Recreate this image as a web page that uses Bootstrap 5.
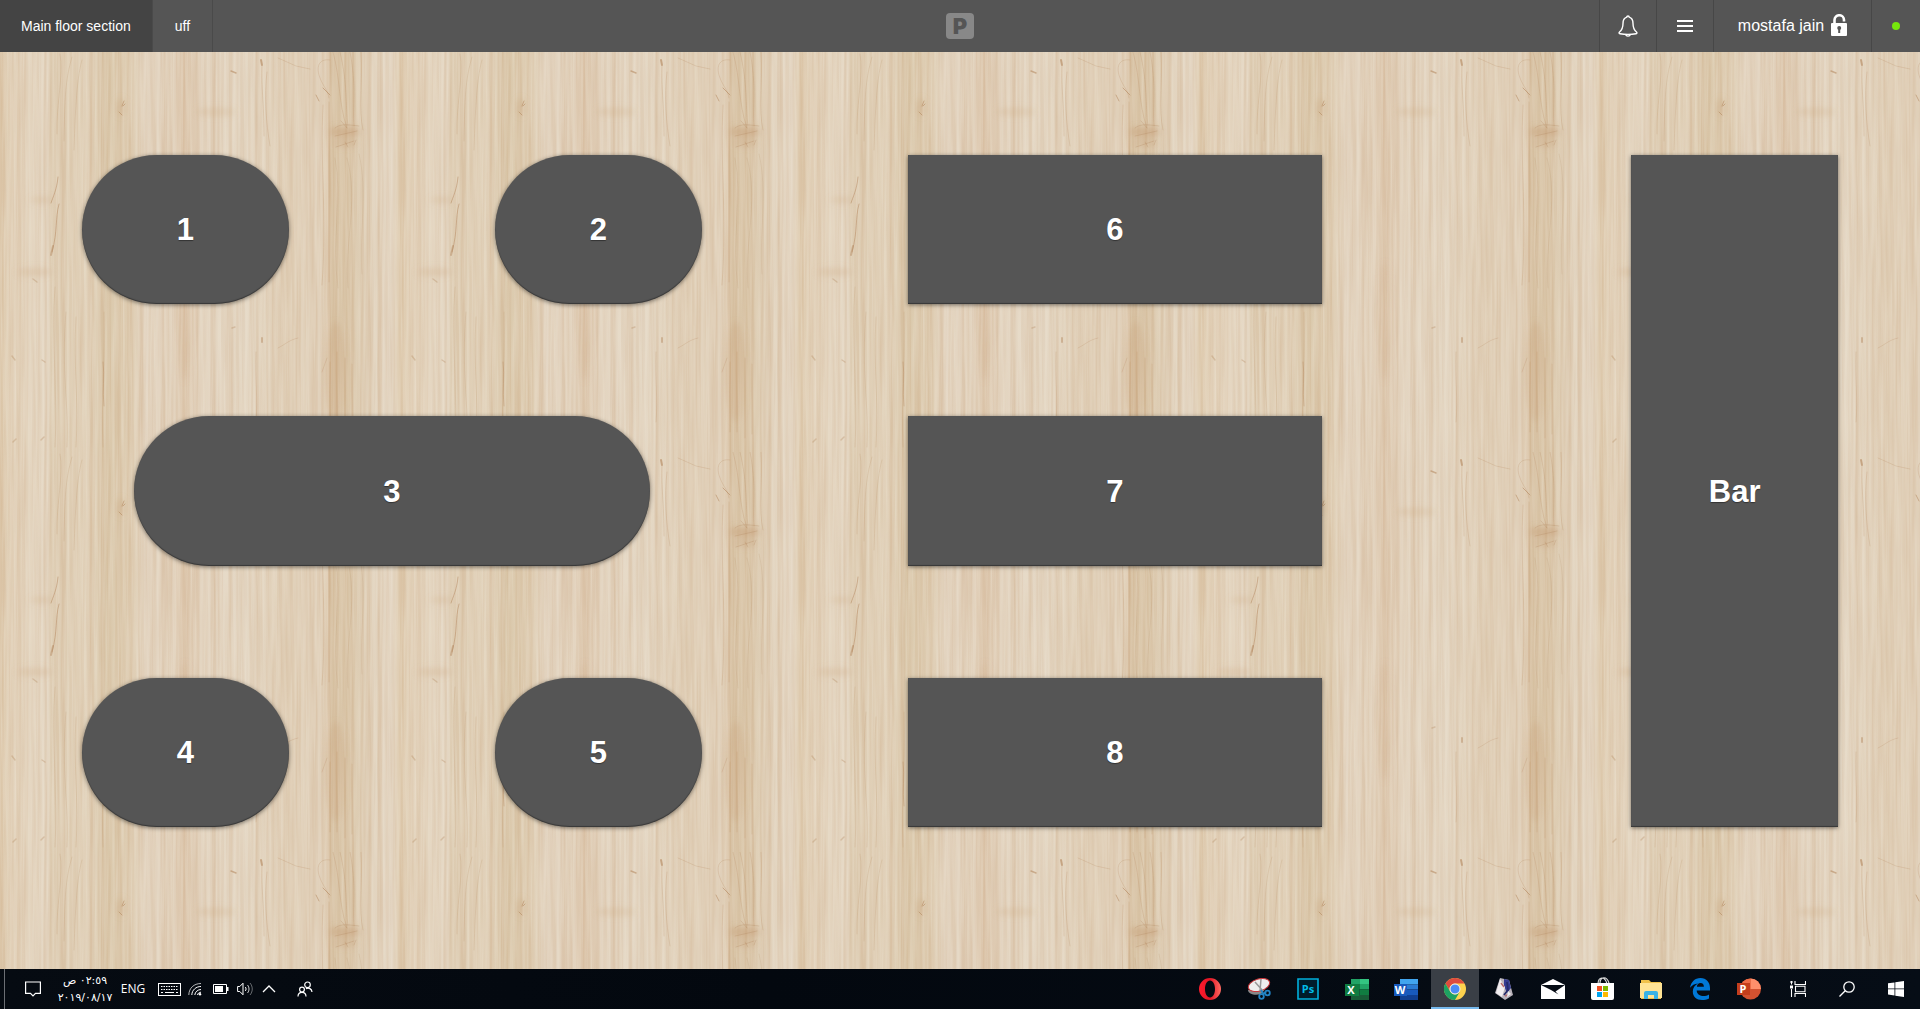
<!DOCTYPE html>
<html lang="en">
<head>
<meta charset="utf-8">
<meta name="viewport" content="width=device-width, initial-scale=1">
<title>Main floor section</title>
<link href="https://cdn.jsdelivr.net/npm/bootstrap@5.3.0/dist/css/bootstrap.min.css" rel="stylesheet">
<style>
  body { font-family: "Liberation Sans", Arial, sans-serif; background: #e1d3be; }
  svg { display: block; }

  /* top bar */
  .topbar { height: 52px; background: #555; color: #fff; display: grid; grid-template-columns: 1fr auto 1fr; }
  .topbar .cell { height: 52px; border: 0; background: none; color: #fff; text-decoration: none; font-size: 14px; padding: 0 20px; display: flex; align-items: center; justify-content: center; }
  .tabs .cell { border-right: 1px solid #4a4a4a; padding: 0 22px; }
  .tabs .cell.current { background: #444; padding: 0 21px; }
  .tools .cell { border-left: 1px solid #474747; width: 57px; padding: 0; }
  .tools .user { width: 158px; font-size: 16px; gap: 7px; }
  .tools .status { width: 49px; }
  .dot { width: 8px; height: 8px; border-radius: 50%; background: #76e80d; }
  .brand { width: 28px; height: 26px; border-radius: 4px; background: #888; }

  /* floor */
  .wood { z-index: 0; }
  .plan { z-index: 1; display: grid; grid-template-columns: repeat(34, 1fr); grid-template-rows: repeat(18, 1fr); padding: 103px 82px 142px; }
  .seat { background: #555; color: #fff; border: 0; font-size: 31px; font-weight: 700; padding: 2px 0 0; text-shadow: 0 1px 1px rgba(0,0,0,.4); box-shadow: 0 1px 4px rgba(0,0,0,.5), inset 0 -1px 1px rgba(0,0,0,.35); border-radius: 0; }
  .seat:hover { background: #555; color: #fff; }
  .r1 { grid-row: 1 / span 4; } .r2 { grid-row: 8 / span 4; } .r3 { grid-row: 15 / span 4; }
  .c1 { grid-column: 1 / span 4; } .c2 { grid-column: 9 / span 4; } .c3 { grid-column: 17 / span 8; }
  .wide { grid-column: 2 / span 10; }
  .counter { grid-column: 31 / span 4; grid-row: 1 / span 18; }

  /* task bar */
  .taskbar { height: 40px; background: linear-gradient(90deg, #060b12, #03080f 40%, #060d16); color: #fff; }
  .taskbar button { border: 0; background: none; color: #fff; padding: 0; height: 40px; display: flex; align-items: center; justify-content: center; }
  .peek { width: 5px; border-right: 1px solid #6c6f74; }
  .w24 { width: 24px; } .w28 { width: 28px; } .w48 { width: 48px; } .w56 { width: 56px; }
  .clock { flex-direction: column; font-family: "DejaVu Sans", sans-serif; font-size: 11px; line-height: 17px; white-space: nowrap; }
  .lang { font-family: "Open Sans", "Noto Sans", sans-serif; font-size: 12px; }
  .apps { gap: 1px; }
  .apps button { width: 48px; }
  .apps .running { background: #3a3f46; border-bottom: 2px solid #76b9ed; padding-top: 2px; }
</style>
<script src="https://cdn.jsdelivr.net/npm/bootstrap@5.3.0/dist/js/bootstrap.bundle.min.js"></script>
</head>
<body class="d-flex flex-column vh-100 overflow-hidden">

<header class="topbar flex-shrink-0">
  <nav class="tabs d-flex" aria-label="Sections">
    <a class="cell current" href="#" aria-current="page">Main floor section</a>
    <a class="cell" href="#">uff</a>
  </nav>
  <div class="d-flex align-items-center">
    <svg class="brand" viewBox="0 0 28 26" role="img" aria-label="P">
      <text x="14" y="21" text-anchor="middle" font-family="Inter, sans-serif" font-weight="900" font-size="22" fill="#555">P</text>
    </svg>
  </div>
  <div class="tools d-flex justify-content-end">
    <button class="cell" aria-label="Notifications">
      <svg width="20" height="22" viewBox="0 0 20 22" fill="none" stroke="#fff" stroke-width="1.4" stroke-linecap="round" stroke-linejoin="round"><path d="M8.8 2.2a1.2 1.2 0 0 1 2.4 0C14 3 15 5.500 15 8.500c0 4.500 1 6.500 3.500 8.500.9.8.5 1.500-.5 1.700-5 .9-11 .9-16 0-1-.2-1.400-.9-.5-1.700C4 15 5 13 5 8.500 5 5.500 6 3 8.800 2.200z"/><path d="M8 20.200c1 1 3 1 4 0"/></svg>
    </button>
    <button class="cell" aria-label="Menu">
      <svg width="16" height="12" viewBox="0 0 16 12" fill="#fff"><path d="M0 0h16v2H0zM0 5h16v2H0zM0 10h16v2H0z"/></svg>
    </button>
    <button class="cell user"><span>mostafa jain</span>
      <svg width="16" height="25" viewBox="0 0 16 25"><path d="M3.500 10V6a4.700 4.700 0 0 1 9.500 0v1.500" fill="none" stroke="#fff" stroke-width="2.600"/><rect y="9" width="16" height="13" rx="1" fill="#fff"/><circle cx="8.200" cy="14" r="2" fill="#555"/><path d="M7.200 14h2v5h-2z" fill="#555"/></svg>
    </button>
    <div class="cell status"><span class="dot"></span></div>
  </div>
</header>

<main class="position-relative flex-grow-1 d-flex">
  <svg class="wood position-absolute top-0 start-0 w-100 h-100" aria-hidden="true">
    <defs>
      <linearGradient id="planks">
        <stop offset="0" stop-color="#dfccb0"/><stop offset=".03" stop-color="#e3d3bc"/><stop offset=".12" stop-color="#e5d8c5"/>
        <stop offset=".127" stop-color="#dfcfb6"/><stop offset=".22" stop-color="#e2d3bc"/><stop offset=".27" stop-color="#dac8ab"/>
        <stop offset=".33" stop-color="#dfceb4"/><stop offset=".36" stop-color="#e4d6c3"/><stop offset=".43" stop-color="#e2d2bd"/>
        <stop offset=".46" stop-color="#dec9b0"/><stop offset=".5" stop-color="#e3d4c0"/><stop offset=".6" stop-color="#e4d7c4"/>
        <stop offset=".72" stop-color="#e1d1ba"/><stop offset=".8" stop-color="#e1d1bb"/><stop offset=".822" stop-color="#e0ceb5"/>
        <stop offset=".826" stop-color="#d8c3a5"/><stop offset=".87" stop-color="#dac7aa"/><stop offset=".92" stop-color="#e1d2bc"/>
        <stop offset=".98" stop-color="#e5d8c6"/><stop offset="1" stop-color="#dfccb0"/>
      </linearGradient>
      <filter id="grain" x="0" y="0" width="1" height="1" color-interpolation-filters="sRGB">
        <feTurbulence type="fractalNoise" baseFrequency=".18 .003" numOctaves="3" seed="7" stitchTiles="stitch"/>
        <feColorMatrix values="0 0 0 0 .74  0 0 0 0 .56  0 0 0 0 .38  .6 0 0 0 -.21"/>
      </filter>
      <filter id="fibre" x="0" y="0" width="1" height="1" color-interpolation-filters="sRGB">
        <feTurbulence type="fractalNoise" baseFrequency=".4 .012" numOctaves="2" seed="21" stitchTiles="stitch"/>
        <feColorMatrix values="0 0 0 0 .94  0 0 0 0 .91  0 0 0 0 .85  0 .7 0 0 -.25"/>
      </filter>
      <filter id="soft" x="-1" y="-1" width="3" height="3"><feGaussianBlur stdDeviation="3"/></filter>
      <pattern id="timber" width="400" height="400" patternUnits="userSpaceOnUse">
        <rect width="400" height="400" fill="url(#planks)"/>
        <rect width="400" height="400" filter="url(#grain)"/>
        <rect width="400" height="400" filter="url(#fibre)"/>
        <g fill="#c49a70" filter="url(#soft)">
          <ellipse cx="345" cy="80" rx="15" ry="5" opacity=".5"/>
          <ellipse cx="345" cy="91" rx="12" ry="4" opacity=".3"/>
          <ellipse cx="336" cy="320" rx="10" ry="50" opacity=".22"/>
          <ellipse cx="216" cy="60" rx="20" ry="4" opacity=".2"/>
          <ellipse cx="121" cy="55" rx="5" ry="9" opacity=".2"/>
          <ellipse cx="185" cy="270" rx="6" ry="60" opacity=".15"/>
          <ellipse cx="35" cy="220" rx="18" ry="4" opacity=".22"/>
          <ellipse cx="42" cy="148" rx="12" ry="3" opacity=".22"/>
        </g>
        <g fill="none" stroke="#ad7d52" stroke-linecap="round">
          <path d="M58 125c-1 12-5 20-7 26M59 152c-4 15-1 26-7 48" stroke-width="1" opacity=".45"/>
          <path d="M53 194l-2 9" stroke-width="2" opacity=".4"/>
          <path d="M60 2c4 20-4 50-3 80M72 5c-7 24-7 40-8 84M82 8c-6 20-7 62-8 90M55 235c-4 50 3 110 0 160M66 260c-5 60 3 90 1 135M76 265c-3 50 3 80 0 130M104 260c1 50-3 90-1 135" stroke-width=".8" opacity=".22"/>
          <path d="M103 310c2 14-1 28 1 44" opacity=".35"/>
          <path d="M119 60l3 3M124 49l-2 5M123 54l2-2" opacity=".5"/>
          <path d="M231 19l5 2" stroke-width="1.500" opacity=".5"/><path d="M261 8l1 5" stroke-width="2" opacity=".55"/>
          <path d="M262 14c-1 22 2 34 2 70M267 20c-3 24-1 50 3 74M256 300c-1 28 2 46 0 70M278 6l18 8 14 3" opacity=".2"/>
          <path d="M262 286v4" stroke-width="2" opacity=".4"/><path d="M232 276l3-1" stroke-width="1.500" opacity=".3"/>
          <path d="M316 43l3 6M323 36l7 7" opacity=".5"/>
          <path d="M330 8c-12-2-14 8-10 18s8 12 9 20M333 0c8 30 5 50 14 76M340 0c8 34 5 50 8 74M350 0c7 36 2 54 4 74M361 0c2 32-3 56 2 78M323 53c-3 60 4 110-1 180M329 50v180" stroke-width=".8" opacity=".25"/>
          <path d="M335 76c6-5 14-3 24-2M335 84l22-5M341 69l6 7M336 95l18-6M345 90l3 5M356 88l-2 5" stroke-width=".8" opacity=".3"/>
          <path d="M335 106c8 40-4 80 3 130M347 106c12 44-3 84 1 130M359 102c9 38 0 80 3 120" stroke-width=".8" opacity=".18"/>
          <path d="M12 304l3 4M42 308l3 2M13 390l3-3M41 388l3-3M33 227l4 3" stroke-width="1.500" opacity=".3"/>
          <path d="M278 296c8-4 11-8 20-10M327 306l-5 14M330 310v70M337 300v80M345 306v80M352 312v70" stroke-width=".8" opacity=".25"/>
        </g>
      </pattern>
    </defs>
    <rect width="100%" height="100%" fill="url(#timber)"/>
  </svg>

  <div class="plan position-relative flex-grow-1">
    <button class="btn seat rounded-pill r1 c1">1</button>
    <button class="btn seat rounded-pill r1 c2">2</button>
    <button class="btn seat r1 c3">6</button>
    <button class="btn seat rounded-pill r2 wide">3</button>
    <button class="btn seat r2 c3">7</button>
    <button class="btn seat rounded-pill r3 c1">4</button>
    <button class="btn seat rounded-pill r3 c2">5</button>
    <button class="btn seat r3 c3">8</button>
    <button class="btn seat counter">Bar</button>
  </div>
</main>

<footer class="taskbar d-flex justify-content-between flex-shrink-0">
  <div class="d-flex">
    <div class="peek"></div>
    <button class="w56" aria-label="Action center"><svg width="16" height="16" viewBox="0 0 16 16" fill="none" stroke="#fff" stroke-width="1.200"><path d="M.6 1h14.800v11.400H10.500L8 15l-2.500-2.600H.6z"/></svg></button>
    <button class="w48 clock"><span dir="rtl">٠٢:٥٩ ص</span><span dir="ltr">٢٠١٩/٠٨/١٧</span></button>
    <button class="w48 lang">ENG</button>
    <button class="w24" aria-label="Keyboard"><svg width="23" height="13" viewBox="0 0 23 13" fill="none" stroke="#fff"><rect x=".5" y=".5" width="22" height="12"/><path d="M3 3.500h17M3 6.500h17" stroke-dasharray="1.500 1"/><path d="M3 9.500h2M7 9.500h9M18 9.500h2"/></svg></button>
    <button class="w28" aria-label="Network"><svg width="14" height="14" viewBox="0 0 14 14" fill="none" stroke="#fff"><path d="M.8 13C1 6 6 1.500 13 1.500" opacity=".7"/><path d="M3.800 13C4 8 8 4.500 13 4.500M6.800 13c.2-3 3-5.500 6.200-5.500M9.500 13c.2-1.500 1.700-2.800 3.500-2.800"/><circle cx="12" cy="12.200" r="1.200" fill="#fff" stroke="none"/></svg></button>
    <button class="w24" aria-label="Battery"><svg width="16" height="10" viewBox="0 0 16 10"><path d="M.5.5h13v9H.5z" fill="none" stroke="#fff"/><path d="M2 2h8v6H2zM14 3h1.500v4H14z" fill="#fff"/></svg></button>
    <button class="w24" aria-label="Volume"><svg width="17" height="14" viewBox="0 0 17 14" fill="none" stroke="#fff"><path d="M.6 4.500h2.200L6 1.200v11.600L2.800 9.500H.6zM8.300 5c1 1.200 1 2.800 0 4"/><path d="M10.500 3c2 2.400 2 5.600 0 8" opacity=".8"/><path d="M13 1c3 3.600 3 8.400 0 12" opacity=".4"/></svg></button>
    <button class="w24" aria-label="Show hidden icons"><svg width="14" height="8" viewBox="0 0 14 8" fill="none" stroke="#fff" stroke-width="1.300"><path d="M1 7l6-6 6 6"/></svg></button>
    <button class="w48" aria-label="People"><svg width="16" height="16" viewBox="0 0 16 16" fill="none" stroke="#fff" stroke-width="1.200"><circle cx="10.500" cy="3.800" r="2.800"/><path d="M9 7.600c2.800-1.500 5.800.4 6 3.400"/><circle cx="5" cy="8.600" r="2.400"/><path d="M1 15.500c0-5.500 8-5.500 8 0"/></svg></button>
  </div>

  <div class="apps d-flex">
    <button aria-label="Opera"><svg width="22" height="22" viewBox="0 0 22 22"><defs><linearGradient id="op" x2="1"><stop offset="0" stop-color="#ff1b2d"/><stop offset=".5" stop-color="#e31525"/><stop offset="1" stop-color="#ff6b62"/></linearGradient></defs><path fill="url(#op)" fill-rule="evenodd" d="M11 0a11 11 0 1 0 0 22 11 11 0 0 0 0-22zm0 2.500c3 0 5 3.800 5 8.500s-2 8.500-5 8.500-5-3.800-5-8.500 2-8.500 5-8.500z"/></svg></button>
    <button aria-label="Snipping Tool"><svg width="24" height="22" viewBox="0 0 24 22"><path d="M1 12c0 4 7 6 13 4l7-8z" fill="#888"/><ellipse cx="12" cy="7" rx="11" ry="6" transform="rotate(-17 12 7)" fill="#eee" stroke="#c8383c"/><path d="M8 4l8 9M14 1l-1 12" stroke="#999" stroke-width="1.500"/><g fill="none" stroke="#2384c6" stroke-width="1.800"><circle cx="14.500" cy="18.500" r="2.300"/><circle cx="20.500" cy="15" r="2.300"/><path d="M14 12l2.500 4 2.500-2"/></g></svg></button>
    <button aria-label="Photoshop"><svg width="22" height="22" viewBox="0 0 22 22"><path d="M1 1h20v20H1z" fill="#001d2b" stroke="#00b0dc" stroke-width="1.600"/><text x="11" y="15" text-anchor="middle" font-family="Open Sans, sans-serif" font-weight="700" font-size="11" fill="#00bdea">Ps</text></svg></button>
    <button aria-label="Excel"><svg width="24" height="21" viewBox="0 0 24 21"><path d="M6 0h9v5H6z" fill="#21a366"/><path d="M15 0h9v5h-9z" fill="#33c481"/><path d="M6 5h9v5H6z" fill="#107c41"/><path d="M15 5h9v5.500h-9z" fill="#21a366"/><path d="M6 10h9v6H6z" fill="#14593a"/><path d="M15 10.500h9V16h-9z" fill="#107c41"/><path d="M6 16h18v5H6z" fill="#185c37"/><path d="M0 5h14v12H0z" fill="#107c41"/><text x="6" y="15" text-anchor="middle" font-family="Open Sans, sans-serif" font-weight="700" font-size="11" fill="#fff">X</text></svg></button>
    <button aria-label="Word"><svg width="24" height="21" viewBox="0 0 24 21"><path d="M6 0h18v5.500H6z" fill="#41a5ee"/><path d="M6 5.500h18v5H6z" fill="#2b7cd3"/><path d="M6 10.500h18V16H6z" fill="#185abd"/><path d="M6 16h18v5H6z" fill="#103f91"/><path d="M0 5h13v12H0z" fill="#185abd"/><text x="6" y="15" text-anchor="middle" font-family="Open Sans, sans-serif" font-weight="700" font-size="11" fill="#fff">W</text></svg></button>
    <button class="running" aria-label="Chrome"><svg width="22" height="22" viewBox="0 0 22 22"><circle cx="11" cy="11" r="11" fill="#fdd24e"/><path d="M1.470 5.500A11 11 0 0 1 20.530 5.500H11a5.500 5.500 0 0 0-4.800 8.200z" fill="#de4b3e"/><path d="M1.470 5.500A11 11 0 0 0 11 22l4.760-8.250a5.500 5.500 0 0 1-9.520 0z" fill="#1da262"/><circle cx="11" cy="11" r="5" fill="#4c8bf5" stroke="#f1f1f1"/></svg></button>
    <button aria-label="Image editor"><svg width="20" height="22" viewBox="0 0 20 22"><path d="M6 0l9 2 4 15-8 5-10-7z" fill="#b9b3bb"/><path d="M10 1l5 1 2 8-4 5-3-7z" fill="#343b91"/><path d="M6 1l-4 14 6 4 3-10z" fill="#f2eef0"/><path d="M13 4l1 8-4 5" stroke="#252a69" stroke-width="1.700" fill="none"/><path d="M7 5l3 4M11 18l5-2" stroke="#b76d70" stroke-width="1.500"/><path d="M14 13l3 3-4 3z" fill="#eee"/></svg></button>
    <button aria-label="Mail"><svg width="24" height="20" viewBox="0 0 24 20"><path d="M12 0l12 6v14H0V6z" fill="#fff"/><path d="M0 6h24l-9.500 6.500 3 3L10 11z" fill="#060c15"/></svg></button>
    <button aria-label="Store"><svg width="23" height="24" viewBox="0 0 23 24"><path d="M7 7c0-8 7-8 9 0M9 6c0-7 7-7 9 0" fill="none" stroke="#ddd" stroke-width="1.200"/><path d="M0 6h23v15q0 2-2 2H2q-2 0-2-2z" fill="#fff"/><path d="M6 9h5v5H6z" fill="#f25022"/><path d="M12 9h5v5h-5z" fill="#7fba00"/><path d="M6 15h5v5H6z" fill="#00a4ef"/><path d="M12 15h5v5h-5z" fill="#ffb900"/></svg></button>
    <button aria-label="File Explorer"><svg width="22" height="19" viewBox="0 0 22 19"><path d="M1 0h8l2 2h10v17H1z" fill="#f0c14b"/><path d="M0 3h22v15H0z" fill="#ffe395"/><path d="M4 19v-6q0-2 2-2h10q2 0 2 2v6h-4v-4H8v4z" fill="#39b3e6"/></svg></button>
    <button aria-label="Edge"><svg width="20" height="22" viewBox="0 0 20 22"><path fill="#0078d7" d="M0 9.800C1 4 4.800 0 10.400 0 16.500 0 20 4.500 20 10v2.500H6.700c.2 4 3.600 5.500 6.700 5.500 2 0 4-.6 5.600-1.600v4C17 21.500 14.500 22 12 22 6.500 22 2.800 18.800 2.800 13.500c0-3.600 2-6.500 5.200-8C4.500 5.700 1.800 7.500 0 9.800zM6.900 8.800h7C13.900 6.500 12.800 5 10.500 5S7 6.800 6.900 8.800z"/></svg></button>
    <button aria-label="PowerPoint"><svg width="24" height="22" viewBox="0 0 24 22"><circle cx="13.500" cy="11" r="10.500" fill="#d35230"/><path d="M13.500.5A10.500 10.500 0 0 1 24 11H13.500z" fill="#ff8f6b"/><path d="M13.500.5V11H3A10.500 10.500 0 0 1 13.500.5z" fill="#ed6c47"/><path d="M0 5h13v12H0z" fill="#c43e1c"/><text x="6" y="15" text-anchor="middle" font-family="Open Sans, sans-serif" font-weight="700" font-size="11" fill="#fff">P</text></svg></button>
    <button aria-label="Task view"><svg width="16" height="16" viewBox="0 0 16 16" fill="none" stroke="#fff" stroke-width="1.100"><path d="M5 0v3.500h10.500V0M5 16v-3.500h10.500V16M5.500 5.200h9.500v5.600H5.500zM1.500 0v3.500M1.500 8v8M0 1h3"/><path d="M0 4.500h3v3H0z" fill="#fff" stroke="none"/></svg></button>
    <button aria-label="Search"><svg width="16" height="16" viewBox="0 0 16 16" fill="none" stroke="#fff" stroke-width="1.300"><circle cx="10" cy="6" r="5.200"/><path d="M6.200 9.800L.5 15.500"/></svg></button>
    <button aria-label="Start"><svg width="16" height="16" viewBox="0 0 16 16" fill="#fff"><path d="M0 2.300L6.500 1.400v6.100H0zM7.300 1.300L16 0v7.500H7.300zM0 8.300h6.500v6.200L0 13.600zM7.300 8.300H16V16l-8.700-1.300z"/></svg></button>
  </div>
</footer>
</body>
</html>
